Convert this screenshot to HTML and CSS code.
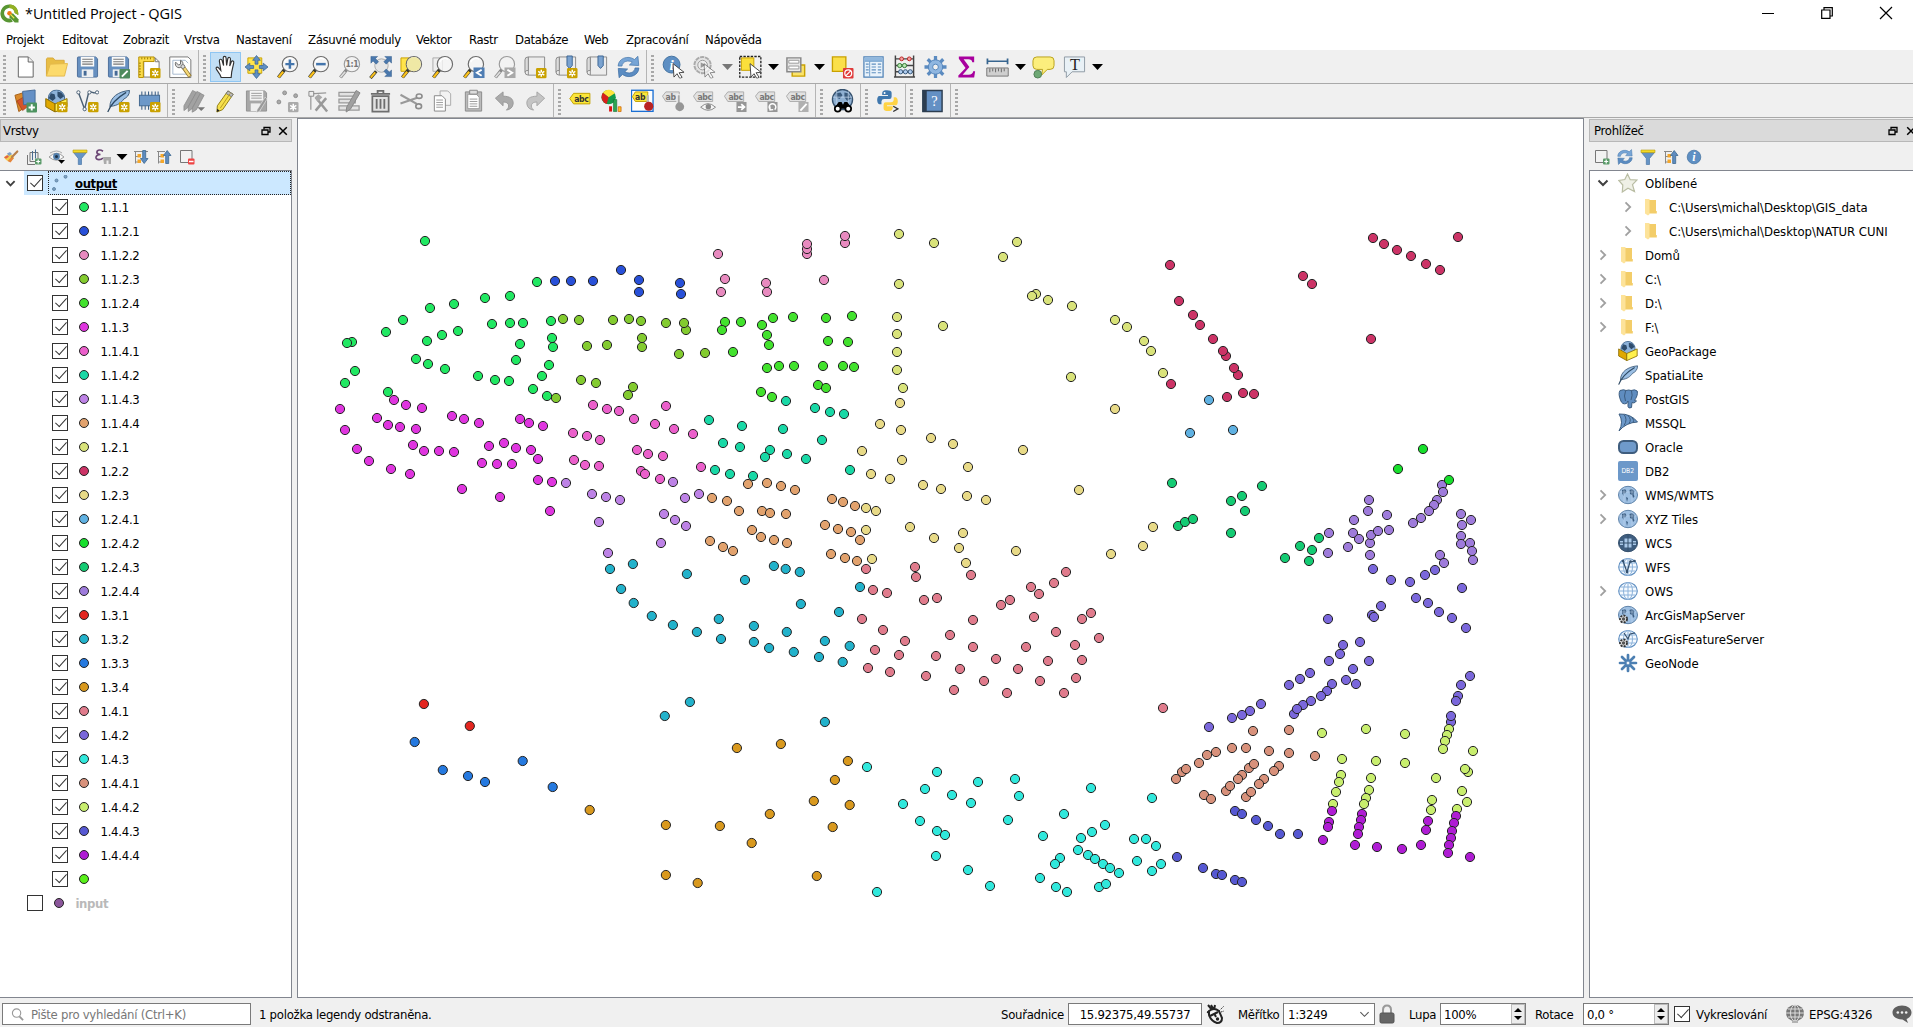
FILE: index.html
```html
<!DOCTYPE html>
<html lang="cs">
<head>
<meta charset="utf-8">
<title>*Untitled Project - QGIS</title>
<link rel="stylesheet" href="styles.css">
</head>
<body>
<svg class="defs" width="0" height="0" aria-hidden="true">
<defs>
<symbol id="star" viewBox="0 0 24 24"><rect x="12.5" y="13" width="11" height="11" rx="1.5" fill="#c9a100"/><path d="M18 14.8v7.4M14.8 16.6l6.4 3.8M21.2 16.6l-6.4 3.8" stroke="#fff" stroke-width="1.5"/><circle cx="18" cy="18.5" r=".9" fill="#c9a100"/></symbol>
<symbol id="gstar" viewBox="0 0 24 24"><rect x="12.5" y="13" width="11" height="11" rx="1.5" fill="#aaa"/><path d="M18 14.8v7.4M14.8 16.6l6.4 3.8M21.2 16.6l-6.4 3.8" stroke="#fff" stroke-width="1.5"/></symbol>
<symbol id="arrow" viewBox="0 0 24 24"><path d="M11.5 8.500l11.500 9-5.200.5 3.200 4.800-2.400 1.200-2.900-5-3.200 3.500z" fill="#fff" stroke="#444" stroke-width="1"/></symbol>
<symbol id="mag" viewBox="0 0 24 24"><path d="M9.200 14.500L2.500 23" stroke="#3a3a2c" stroke-width="3.600"/><path d="M7.500 17L2.700 22.600" stroke="#fcc21b" stroke-width="2.300"/><circle cx="14.500" cy="9" r="8" fill="#f6f6f6" fill-opacity=".8" stroke="#6b6b6b" stroke-width="1.200"/><path d="M9 7a6 6 0 0 1 9-3" fill="none" stroke="#fff" stroke-width="1.500"/></symbol>
<symbol id="gmag" viewBox="0 0 24 24"><path d="M9.200 14.500L2.500 23" stroke="#888" stroke-width="3.400"/><path d="M7.500 17L2.700 22.600" stroke="#ddd" stroke-width="1.800"/><circle cx="14.500" cy="9" r="8" fill="#f2f2f2" stroke="#9a9a9a" stroke-width="1.200"/></symbol>
<symbol id="new" viewBox="0 0 24 24"><path d="M4.500 1.500h10.500l5 5v16H4.500z" fill="#fff" stroke="#606060"/><path d="M14.800 1.500v5.300h5.200" fill="#eee" stroke="#606060"/></symbol>
<symbol id="open" viewBox="0 0 24 24"><path d="M1.500 21.500v-18l1-.9h6l2 2.400h9.500v3.500" fill="#e8bd45" stroke="#d8a93c"/><path d="M1.500 21.500l4-12.500 18-.6-3.200 13.100z" fill="#fcda6c" stroke="#e4b94b"/></symbol>
<symbol id="save" viewBox="0 0 24 24"><path d="M1.500 2.500q0-1 1-1h18l2 2v18q0 1-1 1h-19q-1 0-1-1z" fill="#6790c0" stroke="#4c6f9b"/><rect x="5" y="1.500" width="14" height="10" fill="#fafafa"/><path d="M6.500 4h11M6.500 6.500h11M6.500 9h11" stroke="#777" stroke-width="1.100"/><rect x="6" y="14.500" width="12" height="8" fill="#eef0f2"/><rect x="8" y="16" width="3" height="5" fill="#456a96"/></symbol>
<symbol id="gsave" viewBox="0 0 24 24"><path d="M1.500 1.500h19l2 2v19h-21z" fill="#a7a7a7" stroke="#929292"/><rect x="5" y="1.500" width="14" height="10" fill="#f4f4f4"/><path d="M6.500 4h11M6.500 6.500h11M6.500 9h11" stroke="#999"/><rect x="6" y="14.500" width="10" height="8" fill="#eee"/><path d="M21 8l2 2-8 13-3 1 .6-3z" fill="#999" stroke="#efefef" stroke-width=".6"/></symbol>
<symbol id="layout" viewBox="0 0 24 24"><path d="M6 2.500h12l4 4v16H6z" fill="#fff" stroke="#777"/><path d="M18 2.500v4h4" fill="none" stroke="#777"/><path d="M.8 1.500h16v4.800H5.600V23H.8z" fill="#fbdc4a" stroke="#b78f00"/><path d="M4 2v2M7 2v2M10 2v2M13 2v2M1 8h2M1 11h2M1 14h2M1 17h2M1 20h2" stroke="#9b7a00"/></symbol>
<symbol id="manager" viewBox="0 0 24 24"><path d="M.8 1.500h19l3 3V23h-22z" fill="#fff" stroke="#777"/><path d="M4 5h13l3 3M4 5v14.500h16" fill="none" stroke="#a5b8ce"/><path d="M14 11l8 11" stroke="#8c7430" stroke-width="4"/><path d="M15 12l6.500 9.500" stroke="#f5d878" stroke-width="2.400"/><path d="M7 7a4 4 0 1 0 5-2v4l-2 1z" fill="#ddd" stroke="#666"/><circle cx="14.500" cy="11.500" r="2" fill="#ddd" stroke="#777"/></symbol>
<symbol id="hand" viewBox="0 0 24 24"><path d="M7.500 23l-1.200-3-3.700-5.500c-1.300-2 .7-3.300 2.200-1.600l2.300 2.700L5.600 5.800c-.2-2.200 2.300-2.700 2.900-.5L10 10.500l-.4-8c0-2.200 2.900-2.200 3 0l.6 7.800 1.200-7c.5-2 3-1.600 2.800.6l-.8 7.100 1.700-4.400c.9-1.800 3-1 2.500 1.100L18.500 17l-.6 6z" fill="#fff" stroke="#303030" stroke-width="1.200"/></symbol>
<symbol id="pan" viewBox="0 0 24 24"><path d="M3 2.500h14.500v16H3z" fill="#ffe44a" stroke="#c9a100"/><g fill="#5f8fc4" stroke="#3b6593" stroke-width=".8"><path d="M12 0l4 5h-2.500v4h-3V5H8zM12 24l4-5h-2.500v-4h-3v4H8zM0 12l5-4v2.500h4v3H5V16zM24 12l-5-4v2.500h-4v3h4V16z"/></g></symbol>
<symbol id="zin" viewBox="0 0 24 24"><use href="#mag"/><path d="M14.500 4.300v9.400M9.800 9h9.400" stroke="#4475ac" stroke-width="2.600"/></symbol>
<symbol id="zout" viewBox="0 0 24 24"><use href="#mag"/><path d="M9.500 9h10" stroke="#4475ac" stroke-width="2.600"/></symbol>
<symbol id="z11" viewBox="0 0 24 24"><use href="#gmag"/><text x="14.500" y="12.300" text-anchor="middle" class="g-bold" fill="#777">1:1</text></symbol>
<symbol id="zfull" viewBox="0 0 24 24"><path d="M7.500 16.500L1.500 23.500" stroke="#3a3a2c" stroke-width="3.400"/><path d="M6.500 17.500L1.800 23" stroke="#fcc21b" stroke-width="2"/><circle cx="13" cy="10.500" r="7" fill="#e6e6e6" stroke="#aaa"/><g fill="#4a78ad" stroke="#335b89" stroke-width=".5"><path d="M2 1h7L6.800 3.200 10 6.500 7.500 9 4.200 5.700 2 8zM23.500 1h-7l2.200 2.200L15.500 6.500 18 9l3.300-3.300L23.500 8zM23.500 22h-7l2.200-2.200-3.200-3.300L18 14l3.300 3.300 2.200-2.300z"/></g></symbol>
<symbol id="zsel" viewBox="0 0 24 24"><path d="M1 2.500h10v14H1z" fill="#ffe44a" stroke="#c9a100"/><use href="#mag"/><circle cx="14.500" cy="9" r="7.400" fill="#efe8a5"/></symbol>
<symbol id="zlay" viewBox="0 0 24 24"><path d="M2 2.500h10v14H2z" fill="#eee" stroke="#aaa"/><use href="#mag"/></symbol>
<symbol id="zlast" viewBox="0 0 24 24"><use href="#mag"/><rect x="12" y="12.500" width="11.500" height="11" fill="#4f7db3"/><path d="M20.500 14.800l-5 3.200 5 3.200" fill="none" stroke="#fff" stroke-width="2"/></symbol>
<symbol id="znext" viewBox="0 0 24 24"><use href="#gmag"/><rect x="12" y="12.500" width="11.500" height="11" fill="#a9a9a9"/><path d="M15 14.800l5 3.200-5 3.200" fill="none" stroke="#fff" stroke-width="2"/></symbol>
<symbol id="map" viewBox="0 0 24 24"><path d="M4.500 1.500h17v19h-17z" fill="#ececec" stroke="#8a8a8a"/><path d="M4.500 20.500q-3.500 0-3.500-3.500V4.500q0-3 3.500-3v14q-3.500 0-3.500 2" fill="#dcdcdc" stroke="#8a8a8a"/></symbol>
<symbol id="mapstar" viewBox="0 0 24 24"><use href="#map"/><use href="#star"/></symbol>
<symbol id="bmstar" viewBox="0 0 24 24"><use href="#map"/><path d="M12.500.5h5.500v10l-2.800 3-2.700-3z" fill="#7ba3d0" stroke="#3d6593"/><use href="#star"/></symbol>
<symbol id="bm" viewBox="0 0 24 24"><use href="#map"/><path d="M12.500.5h5.500v10l-2.800 3-2.700-3z" fill="#7ba3d0" stroke="#3d6593"/></symbol>
<symbol id="refresh" viewBox="0 0 24 24"><path d="M1.200 11C1.200 3.500 11-1 18.300 4.200L21.800.8l.9 9.700-9.800-.6 3-2.900C12 4.500 5.500 6 5.200 11z" fill="#77a5d6" stroke="#4879ae" stroke-width=".8"/><path d="M22.800 13c0 7.500-9.800 12-17.100 6.800l-3.500 3.400-.9-9.700 9.800.6-3 2.900c3.900 2.500 10.400 1 10.700-4z" fill="#5b8cc2" stroke="#4171a5" stroke-width=".8"/></symbol>
<symbol id="info" viewBox="0 0 24 24"><circle cx="10" cy="9.500" r="8.800" fill="#5e8fc3" stroke="#41709f"/><text x="10" y="15" text-anchor="middle" class="g-serif" font-size="16" fill="#fff">i</text><use href="#arrow"/></symbol>
<symbol id="action" viewBox="0 0 24 24"><circle cx="10" cy="10" r="8.500" fill="#e4e4e4" stroke="#aaa" stroke-width="2" stroke-dasharray="4.500 .8"/><circle cx="10" cy="10" r="5" fill="#eee" stroke="#999"/><path d="M8 7l5 3-5 3z" fill="#999"/><use href="#arrow" opacity=".6"/></symbol>
<symbol id="select" viewBox="0 0 24 24"><rect x=".8" y="1" width="22" height="21.500" fill="none" stroke="#222" stroke-width="1.400" stroke-dasharray="2.500 1.300"/><path d="M2.500 2.500h13v13h-13z" fill="#fbdf3b" stroke="#c9a100"/><use href="#arrow"/></symbol>
<symbol id="selval" viewBox="0 0 24 24"><path d="M7.500 10h13v11.500h-13z" fill="#fbe36a" stroke="#c9a100" stroke-width="1.500"/><path d="M2 2.500h14.500v14.500H2z" fill="#e9e9e9" stroke="#868686" stroke-width="1.500"/><path d="M4 5h10.500v3H4zM4 11h10.500v3H4z" fill="#fff" stroke="#999"/></symbol>
<symbol id="desel" viewBox="0 0 24 24"><path d="M1.500 1.500h14v15h-14z" fill="#fbe04a" stroke="#c9a100" stroke-width="1.400"/><rect x="12.500" y="13" width="11" height="11" rx="1" fill="#e03a3a"/><circle cx="18" cy="18.500" r="3.600" fill="none" stroke="#fff" stroke-width="1.300"/><path d="M15.500 21l5-5" stroke="#fff" stroke-width="1.300"/></symbol>
<symbol id="table" viewBox="0 0 24 24"><path d="M2 1.500h20v21H2z" fill="#eaf3fb" stroke="#4f81b6" stroke-width="1.300"/><path d="M2.500 2h19v4h-19z" fill="#91b8de"/><path d="M3 6h18M8 6v16" stroke="#6f9dca"/><path d="M4 9h3M4 12h3M4 15h3M4 18h3M10 9h4.500M10 12h4.500M10 15h4.500M10 18h4.500M16.500 9h3.500M16.500 12h3.500M16.500 15h3.500M16.500 18h3.500" stroke="#5f90c0" stroke-width="1.300"/></symbol>
<symbol id="abacus" viewBox="0 0 24 24"><path d="M2.500 0v23M21.500 0v23M2 3.500h20M2 10.500h20M2 17h20M1 22.500h22" stroke="#444" stroke-width="1.500"/><g stroke-width="1"><g fill="#f3a0a0" stroke="#b22"><circle cx="9" cy="3.500" r="2"/><circle cx="17" cy="3.500" r="2"/></g><g fill="#b6e8b0" stroke="#373"><circle cx="7" cy="10.500" r="2.200"/><circle cx="12" cy="10.500" r="2.200"/></g><g fill="#b0cdf0" stroke="#357"><circle cx="8" cy="17" r="2.200"/><circle cx="13" cy="17" r="2.200"/><circle cx="18" cy="17" r="2.200"/></g></g></symbol>
<symbol id="gear" viewBox="0 0 24 24"><g stroke="#5b8bc0" stroke-width="3.400"><path d="M12 .5v23M.5 12h23M3.900 3.900l16.200 16.200M20.100 3.900L3.900 20.100"/></g><circle cx="12" cy="12" r="7.500" fill="#8fb6e0" stroke="#5485bb"/><circle cx="12" cy="12" r="3" fill="#f0f0f0" stroke="#5485bb"/></symbol>
<symbol id="sigma" viewBox="0 0 24 24"><path d="M4 1h16v6h-2q-.5-3-4-3H9l6 8-7 8h6q4.500 0 5-3.500h2L20 23H3.500v-2.200L11 13 4 3.500z" fill="#a8009e"/></symbol>
<symbol id="ruler" viewBox="0 0 24 24"><path d="M1.500 6h21M1.500 3v6M22.500 3v6" stroke="#37658f" stroke-width="1.800"/><path d="M.8 13h22.400v8.500H.8z" fill="#cfcfcf" stroke="#777"/><path d="M4 13.500v4M7 13.500v3M10 13.500v4M13 13.500v3M16 13.500v4M19 13.500v3" stroke="#666"/></symbol>
<symbol id="tip" viewBox="0 0 24 24"><path d="M5 1.500h14q4 0 4 4v5q0 4-4 4h-3l-6 6 1-6H5q-4 0-4-4v-5q0-4 4-4z" fill="#fcee7d" stroke="#b8a018"/><circle cx="6" cy="19.500" r="4" fill="#6ea875" stroke="#4e7d55"/></symbol>
<symbol id="text" viewBox="0 0 24 24"><path d="M1.500 1.500h21v15.500h-13l-6 6v-6h-2z" fill="#e9f1f6" stroke="#8e9aa4"/><text x="12.500" y="15" text-anchor="middle" class="g-serifn" font-size="17" fill="#222">T</text></symbol>
<symbol id="dsm" viewBox="0 0 24 24"><path d="M1 6l10-3 3 14-9 6z" fill="#d98a2c" stroke="#a65f16"/><path d="M3 12l12-7 3 10-9 7z" fill="#d3552b" stroke="#97350f" stroke-width=".6"/><path d="M9 2l13-1.500v14L10 16z" fill="#6590c5" stroke="#456b99"/><rect x="13" y="13.500" width="11" height="10.500" rx="1" fill="#4d9360"/><path d="M18.500 15.500v6.500M15.200 18.700h6.600" stroke="#fff" stroke-width="2"/></symbol>
<symbol id="gpkg" viewBox="0 0 24 24"><circle cx="12" cy="9" r="8.500" fill="#8db2d9" stroke="#3f658e"/><path d="M6 4l4 1 1 4-3 3-4-3zM13 2l4 1 3 4-4 3-3-3z" fill="#2f4d6d"/><path d="M.8 9.500l9.700 5.500v8.500L.8 18z" fill="#e0a800" stroke="#8a6b00"/><path d="M10.500 15l12.500-5.500V18l-12.500 5.500z" fill="#fff04d" stroke="#8a6b00"/></symbol>
<symbol id="newpkg" viewBox="0 0 24 24"><use href="#gpkg"/><use href="#star"/></symbol>
<symbol id="shp" viewBox="0 0 24 24"><path d="M2.500 3L9 20.500 13 4q1-2 4-1t5 0" fill="none" stroke="#4b6075" stroke-width="1.500"/><g fill="#fff" stroke="#4b6075"><circle cx="2.500" cy="3" r="1.700"/><circle cx="9" cy="20.500" r="1.700"/><circle cx="14" cy="3" r="1.700"/><circle cx="22" cy="3" r="1.700"/></g></symbol>
<symbol id="newshp" viewBox="0 0 24 24"><use href="#shp"/><use href="#star"/></symbol>
<symbol id="feather" viewBox="0 0 24 24"><path d="M3 18C3 8 12 2 23.500 1c0 5-3 7.500-6 9-3 4-6 6.500-13 7.500z" fill="#9bbfe4" stroke="#3d5a78"/><path d="M.8 23.500Q5 12 20 3" fill="none" stroke="#2d4963" stroke-width="1.300"/></symbol>
<symbol id="newfeather" viewBox="0 0 24 24"><use href="#feather"/><use href="#star"/></symbol>
<symbol id="chip" viewBox="0 0 24 24"><path d="M4 2v19M7.500 2v19M11 2v19M14.500 2v19M18 2v19M21 2v19" stroke="#3c5f86" stroke-width="1.100"/><rect x="1.500" y="6" width="21" height="11" fill="#6c98c9" stroke="#42688f"/><use href="#star"/></symbol>
<symbol id="pencils" viewBox="0 0 24 24"><g fill="#a2a2a2" stroke="#8b8b8b" stroke-width=".8"><path d="M10 1l4 2L5 19l-4 3 0-5z"/><path d="M14.500 2l4 2-9 16-4 3 0-5z"/><path d="M18 4l4 2-8 15-4.500 3 .5-5z"/></g></symbol>
<symbol id="pencil" viewBox="0 0 24 24"><path d="M14.500 1.500L20 5 9 21l-6 2.500L3.500 17z" fill="#f6e04c" stroke="#8e7b14"/><path d="M14.500 1.500L20 5l-1.800 2.600-5.500-3.400z" fill="#bbb" stroke="#777"/><path d="M17 4L6.500 19.500" stroke="#b79b20"/><path d="M3 23.500l.3-3.500 2.500 2z" fill="#222"/></symbol>
<symbol id="pts" viewBox="0 0 24 24"><g fill="#aaa" stroke="#8d8d8d"><circle cx="3" cy="13" r="2"/><circle cx="9" cy="3.500" r="2"/><circle cx="20.500" cy="6.500" r="2"/></g><use href="#gstar"/></symbol>
<symbol id="vertex" viewBox="0 0 24 24"><path d="M4 21V4.500l16-1" fill="none" stroke="#999" stroke-width="1.300"/><path d="M2 2h5v5H2z" fill="#eee" stroke="#888"/><path d="M9 22L20 9M9 8l12 15" stroke="#999" stroke-width="2.600"/><path d="M8 8l4-3 4 3-5 5z" fill="#aaa"/></symbol>
<symbol id="multi" viewBox="0 0 24 24"><path d="M1 3h18v4H1zM1 10h17v4H1zM1 17h21v4.500H1z" fill="#e2e2e2" stroke="#999" stroke-width="1.300"/><path d="M19 1l4 2.500-10 17-4.500 3 .5-5z" fill="#a0a0a0" stroke="#888"/></symbol>
<symbol id="trash" viewBox="0 0 24 24"><path d="M3.500 7h17v16h-17z" fill="#e2e2e2" stroke="#6e6e6e" stroke-width="1.800"/><path d="M2 4.500h20M9 4V1.500h6V4M8 10v10M12 10v10M16 10v10" fill="none" stroke="#6e6e6e" stroke-width="1.900"/></symbol>
<symbol id="cut" viewBox="0 0 24 24"><path d="M.5 5.500l17 9.500M.5 14.500L18 8.500" stroke="#999" stroke-width="2.200"/><ellipse cx="20" cy="7" rx="3" ry="2.300" fill="none" stroke="#8c8c8c" stroke-width="1.700"/><ellipse cx="19.500" cy="17.500" rx="3" ry="2.500" fill="none" stroke="#8c8c8c" stroke-width="1.700"/></symbol>
<symbol id="copy" viewBox="0 0 24 24"><path d="M9.500 1.500h8l3 3v12h-11z" fill="#f3f3f3" stroke="#aaa"/><path d="M3.500 6.500h8l3.500 3.500v12.500H3.500z" fill="#fff" stroke="#888"/><path d="M5.500 11h7M5.500 13.500h7M5.500 16h7M5.500 18.500h7" stroke="#999"/></symbol>
<symbol id="paste" viewBox="0 0 24 24"><path d="M3.500 2.500h17v20h-17z" fill="#bbb" stroke="#8a8a8a"/><path d="M6 5h9l3 3v12H6z" fill="#fff" stroke="#999"/><path d="M8 .8h8v4H8z" fill="#ddd" stroke="#888"/><path d="M8 10h8M8 12.500h8M8 15h8M8 17.500h8" stroke="#999"/></symbol>
<symbol id="undo" viewBox="0 0 24 24"><path d="M2.500 9l8-6.500V7c7 0 11 2.500 10.500 8-.4 4-3.500 6-7 6.500 4-3.500 3-8.500-3.500-8.500v4z" fill="#aaa" stroke="#999"/></symbol>
<symbol id="redo" viewBox="0 0 24 24"><path d="M21.500 9l-8-6.500V7C6.500 7 2.500 9.500 3 15c.4 4 3.500 6 7 6.500-4-3.500-3-8.500 3.500-8.500v4z" fill="#c4c4c4" stroke="#a5a5a5"/></symbol>
<symbol id="abc" viewBox="0 0 24 24"><path d="M.8 9.500l4-5.500h17v11H4.800z" fill="#fbe63a" stroke="#c0a000"/><text x="12.800" y="13" text-anchor="middle" class="g-bold" fill="#333">abc</text></symbol>
<symbol id="gabc" viewBox="0 0 24 24"><path d="M.5 7L4 2.500h16.500v10H4z" fill="#e2e2e2" stroke="#ababab"/><text x="12" y="10.500" text-anchor="middle" class="g-bold" fill="#777">abc</text></symbol>
<symbol id="chart" viewBox="0 0 24 24"><circle cx="9" cy="8" r="7.500" fill="#159a4a"/><path d="M9 8L3 3.500A7.500 7.500 0 0 1 15.500 4z" fill="#ffe43a"/><path d="M9 8L3 3.500A7.500 7.500 0 0 0 7 15z" fill="#d8201c"/><path d="M9.500 17.500h3V23h-3z" fill="#d11"/><path d="M14 10.500h3.500V23H14z" fill="#2aa653" stroke="#176b35" stroke-width=".6"/><path d="M19 18h3v5h-3z" fill="#ffc21e" stroke="#c61" stroke-width=".8"/></symbol>
<symbol id="pinabc" viewBox="0 0 24 24"><rect x=".5" y=".8" width="22.500" height="22" fill="#fdfdfd" stroke="#1a6fd4" stroke-width="1.400"/><path d="M1.500 7.500l3-5h13v10h-13z" fill="#fbe63a" stroke="#c0a000"/><text x="9.500" y="11" text-anchor="middle" class="g-bold" fill="#333">ab</text><path d="M17.500 6v10" stroke="#bbb" stroke-width="2.500"/><circle cx="18.500" cy="17.500" r="4.800" fill="#b92222"/></symbol>
<symbol id="gpin" viewBox="0 0 24 24"><path d="M.5 7L4 2.500h14v10H4z" fill="#e2e2e2" stroke="#ababab"/><text x="9" y="10.500" text-anchor="middle" class="g-bold" fill="#777">ab</text><path d="M17.500 5v12" stroke="#efefef" stroke-width="5"/><path d="M17.500 6v10" stroke="#aaa" stroke-width="2"/><circle cx="18.500" cy="18" r="4.600" fill="#969696"/></symbol>
<symbol id="geye" viewBox="0 0 24 24"><use href="#gabc"/><path d="M8 18.500q7.500-7.500 15.500 0-7.500 6.500-15.500 0z" fill="#f5f5f5" stroke="#888"/><circle cx="16" cy="18" r="2.800" fill="#888"/></symbol>
<symbol id="gmove" viewBox="0 0 24 24"><use href="#gabc"/><rect x="13" y="13" width="10.500" height="10.500" fill="#969696"/><path d="M14.500 18.300h6M18 15.300l3.300 3-3.300 3" fill="none" stroke="#fff" stroke-width="1.900"/></symbol>
<symbol id="grot" viewBox="0 0 24 24"><use href="#gabc"/><rect x="13" y="13" width="10.500" height="10.500" fill="#969696"/><path d="M16 21a3.500 3.500 0 1 1 4.500 0M15.500 17.500l.2 3.800 3.300-.3" fill="none" stroke="#fff" stroke-width="1.500"/></symbol>
<symbol id="gedit" viewBox="0 0 24 24"><use href="#gabc"/><rect x="13" y="13" width="10.500" height="10.500" fill="#b0b0b0"/><path d="M15 22l6.500-7" stroke="#fff" stroke-width="2"/></symbol>
<symbol id="search3" viewBox="0 0 24 24"><circle cx="12" cy="10.500" r="10.500" fill="#8fb0d2" stroke="#35516e" stroke-width="1.400"/><path d="M5 4l5-1 2 3-3 4-4-2zM14 3l4 1 3 5-4 3-3-4z" fill="#3a5a7c"/><path d="M2 8h20M6 1.500v15M18 2v13" stroke="#c3d8ee" stroke-width=".8"/><path d="M8 13h3l1.500 3L14 13h3l5 7H3z" fill="#000"/><circle cx="7" cy="20" r="3" fill="#fff" stroke="#000" stroke-width="1.800"/><circle cx="18" cy="20" r="3" fill="#fff" stroke="#000" stroke-width="1.800"/></symbol>
<symbol id="python" viewBox="0 0 24 24"><path d="M11.500.8c-5 0-5 1.500-5 5h6v1H3.500c-3 0-3 8 0 8.500h2.200v-3q.3-2.300 2.800-2.300h5.500q2.300 0 2.300-2.500V3.500C16.300 1.500 14 .8 11.500.8z" fill="#3f77ad"/><path d="M12.500 22.500c4.500 0 5-1.500 5-5h-6v-1h9c3 0 3-8 0-8.500h-2v3q-.3 2.300-2.800 2.300h-5.500q-2.300 0-2.300 2.500v4c0 2 2 2.700 4.600 2.700z" fill="#ffd344"/><circle cx="9" cy="3.600" r="1" fill="#fff"/><path d="M18 17.500l4.800 2.700L18 23" fill="none" stroke="#333" stroke-width="1.300"/></symbol>
<symbol id="help" viewBox="0 0 24 24"><path d="M2 1h20v22H2z" fill="#6490c4" stroke="#2c3d50" stroke-width="1.500"/><path d="M1.500.5H6v23H1.500z" fill="#2c3d50"/><text x="14" y="17" text-anchor="middle" class="g-serifn" font-size="15" fill="#fff">?</text></symbol>
<symbol id="chev" viewBox="0 0 12 12"><path d="M1.500 3.500L6 8l4.500-4.500" fill="none" stroke="#404040" stroke-width="2"/></symbol>
<symbol id="chevr" viewBox="0 0 12 12"><path d="M3.500 1.300L8.200 6l-4.700 4.700" fill="none" stroke="#a0a0a0" stroke-width="1.800"/></symbol>
<symbol id="float" viewBox="0 0 10 10"><path d="M3 3.500V1.500h6v4.500H7" fill="none" stroke="#000" stroke-width="1.300"/><path d="M1 4h6v4.500H1z" fill="none" stroke="#000" stroke-width="1.300"/></symbol>
<symbol id="close" viewBox="0 0 10 10"><path d="M1.200 1.200l7.600 7.600M8.800 1.200L1.200 8.800" stroke="#000" stroke-width="1.500"/></symbol>
<symbol id="brush" viewBox="0 0 16 16"><path d="M1 8.500q3-4 7-3.500l3 4-3.500 3.500q-4 0-6.500-4z" fill="#f5cf4e"/><path d="M1 8.300l3.500-2 1.500 1.500-3 2z" fill="#e0604a"/><path d="M4 4.500l3-1.500 2 2-3 2z" fill="#7f9fc6"/><path d="M4.500 12l4-4 2.500 1-3.500 4.500z" fill="#e5853b"/><path d="M9 8l5.300-5.500" stroke="#b9814b" stroke-width="2.200" stroke-linecap="round"/></symbol>
<symbol id="addgrp" viewBox="0 0 16 16"><path d="M4 3.500h8v9H4z" fill="#eee" stroke="#777"/><path d="M1.500 6v9.500H9" fill="none" stroke="#777"/><path d="M6.500 2v9M9.500 .5v9" stroke="#4b6d92"/><rect x="9" y="9.500" width="6.500" height="6" rx="1" fill="#5a9a69"/><path d="M12.200 10.500v4M10.200 12.500h4" stroke="#fff" stroke-width="1.200"/></symbol>
<symbol id="eye" viewBox="0 0 16 16"><path d="M0 8q7.500-7.500 15 0-7.500 6.500-15 0z" fill="#f8f8f8" stroke="#999"/><circle cx="7.500" cy="7.500" r="3.400" fill="#5380ad"/><circle cx="7.500" cy="7.500" r="1.500" fill="#1f3247"/><path d="M1 4q7-4 12 0" fill="none" stroke="#aaa"/><path d="M9 11h7l-3.500 3.800z" fill="#000"/></symbol>
<symbol id="filter" viewBox="0 0 16 16"><path d="M1.500 3.500h13l-5 6v6h-3.200v-6z" fill="#6694c6" stroke="#4b77a8" stroke-width=".7"/><path d="M1 1h14v2.600H1z" fill="#f4d926" stroke="#b79b10" stroke-width=".6"/></symbol>
<symbol id="eps" viewBox="0 0 16 16"><path d="M8 2.200C4-.5 1.500 2 2 3.800c.3 1.200 2 1.700 3.500 1.700C2.500 5.500.8 7 1 8.700c.5 2.700 5 2.500 7 .3" fill="none" stroke="#6b4574" stroke-width="1.700"/><path d="M8 8h8v7h-2.500v-3.500h-2V15H9z" fill="#aaa"/></symbol>
<symbol id="expand" viewBox="0 0 16 16"><path d="M1 2.500h14M2.500 2.500v12M2.500 7.500h4M2.500 13h4" stroke="#888"/><rect x="4.500" y="5" width="3.500" height="3.500" fill="#f5a72a"/><rect x="4.500" y="10.500" width="3.500" height="3.500" fill="#f5a72a"/><path d="M9.700 1.500h3v8H15l-3.800 5L7.500 9.500h2.200z" fill="#5e8cc0" stroke="#3d688f" stroke-width=".8"/></symbol>
<symbol id="collapse" viewBox="0 0 16 16"><path d="M1 2.500h8M2.500 2.500v12M2.500 7.500h4M2.500 13h4" stroke="#888"/><rect x="4.500" y="5" width="3.500" height="3.500" fill="#f5a72a"/><rect x="4.500" y="10.500" width="3.500" height="3.500" fill="#f5a72a"/><path d="M9.700 14.500h3v-8H15l-3.800-5-3.700 5h2.200z" fill="#5e8cc0" stroke="#3d688f" stroke-width=".8"/></symbol>
<symbol id="remove" viewBox="0 0 16 16"><path d="M1.500 1.500h11.500v12H1.500z" fill="#f2f2f2" stroke="#777"/><rect x="9" y="9.500" width="6.500" height="6" rx="1" fill="#e44"/><path d="M10 12.500h4.500" stroke="#fff" stroke-width="1.500"/></symbol>
<symbol id="addsel" viewBox="0 0 16 16"><path d="M1.500 1.500h11.500v12H1.500z" fill="#f2f2f2" stroke="#777"/><rect x="9" y="9.500" width="6.500" height="6" rx="1" fill="#5a9a69"/><path d="M12.200 10.500v4M10.200 12.500h4" stroke="#fff" stroke-width="1.200"/></symbol>
<symbol id="info2" viewBox="0 0 16 16"><circle cx="8" cy="8" r="6.800" fill="#5e8fc3" stroke="#41709f" stroke-width=".7"/><text x="8" y="12.200" text-anchor="middle" class="g-serif" font-size="12" fill="#fff">i</text></symbol>
<symbol id="ptlayer" viewBox="0 0 16 16"><g fill="#7fa3c4" stroke="#55799b" stroke-width=".8"><circle cx="2" cy="14" r="1.500"/><circle cx="4.500" cy="5.500" r="1.500"/><circle cx="13.500" cy="1.700" r="1.500"/></g></symbol>
<symbol id="fav" viewBox="0 0 20 20"><path d="M9.500 1l2.700 5.700 6.800.3-4.500 4.700 2 6.800-6.500-3.300L4.300 19l.5-7L.8 7.500l6-1z" fill="#eff0e6" stroke="#b9bda3" stroke-width="1.200"/></symbol>
<symbol id="folder" viewBox="0 0 20 20"><path d="M7 3h7v11h.8v2.500H7z" fill="#f3cd69"/><path d="M3 2h4.500v15.200L6 18.500 3 16.500z" fill="#fde39a"/></symbol>
<symbol id="pg" viewBox="0 0 20 20"><path d="M2 1.500q4-1.500 6 0 3-1 5 0 4-1.500 6.200.5c1 3-1 7-2.700 9.500l2 .5-2.500 2-2-.5-.5 5q-3 1.500-3.500-1L10 12l-1.500 2.500Q4 16 2.500 11 0 5 2 1.500z" fill="#5f8dc0" stroke="#3c5d80"/><path d="M7.500 2q-2 5 0 10M13.500 2q1.500 4-.5 9" fill="none" stroke="#3c5d80"/></symbol>
<symbol id="mssql" viewBox="0 0 20 20"><path d="M1 1q12-.5 18.500 8Q8 9.500 1 18q5-9 0-17z" fill="#6c98c9" stroke="#3c5d80"/><path d="M6 1.500q4 5 0 11M10 2.500q4 4 1 8M14 4.500q3 3 1 5" fill="none" stroke="#3c5d80"/></symbol>
<symbol id="oracle" viewBox="0 0 20 20"><rect x="1" y="4" width="18" height="12" rx="4.500" fill="#6f9acb" stroke="#3f5d7e" stroke-width="2"/></symbol>
<symbol id="db2" viewBox="0 0 20 20"><rect width="20" height="20" rx="2" fill="#6c98c9"/><text x="9.800" y="12" text-anchor="middle" class="g-sans" font-size="6.800" fill="#fff">DB2</text></symbol>
<symbol id="globe" viewBox="0 0 20 20"><ellipse cx="10" cy="10" rx="9.500" ry="8.700" fill="#9dbfe2" stroke="#5f83a9"/><path d="M4 5l3-1 1 1.500.5 1-1.500 2-1.500-.5v3l-1.500-3zM11.500 5l2.500-1 2.500 2.500-1 2.500 1 2.500-1.500 1.500-1-3-2-1zM8 12l2 1-1 4z" fill="#3d5f84"/><path d="M6 2.500v15M14 2.500v15M1 7h18" stroke="#c5dbf0" stroke-width=".5"/></symbol>
<symbol id="wcs" viewBox="0 0 20 20"><ellipse cx="10" cy="10" rx="9.500" ry="8.700" fill="#3f5e80" stroke="#35506c"/><path d="M6.500 5.500h7v9h-7zM2 8h3v4H2zM15 8h3v4h-3z" fill="#a9c8e8"/><path d="M10 1.500v17M1 10h18" stroke="#35506c"/></symbol>
<symbol id="wire" viewBox="0 0 20 20"><ellipse cx="10" cy="10" rx="9.300" ry="8.500" fill="#f5faff" stroke="#5d8dc0" stroke-width="1.100"/><ellipse cx="10" cy="10" rx="4.500" ry="8.500" fill="none" stroke="#8cb2da"/><path d="M10 1.500v17M1 10h18M2.500 6h15M2.500 14h15" stroke="#8cb2da"/></symbol>
<symbol id="wfs" viewBox="0 0 20 20"><use href="#wire"/><path d="M5 4l4 11L12 5l5-1" fill="none" stroke="#34506d" stroke-width="1.200"/><g fill="#34506d"><circle cx="5" cy="4" r="1.300"/><circle cx="9" cy="15" r="1.300"/><circle cx="12.500" cy="4.500" r="1.300"/><circle cx="16.500" cy="4" r="1.300"/></g></symbol>
<symbol id="cog" viewBox="0 0 20 20"><circle cx="5.500" cy="14" r="3.500" fill="#ddd" stroke="#333" stroke-width="1.800" stroke-dasharray="2 1.200"/><circle cx="5.500" cy="14" r="1.700" fill="#555"/></symbol>
<symbol id="ams" viewBox="0 0 20 20"><use href="#globe"/><use href="#cog"/></symbol>
<symbol id="afs" viewBox="0 0 20 20"><use href="#wire"/><path d="M6 4l4 6 2-5 5-1" fill="none" stroke="#34506d" stroke-width="1.200"/><use href="#cog"/></symbol>
<symbol id="geonode" viewBox="0 0 20 20"><path d="M10 2v16M2 10h16M4 4l12 12M16 4L4 16" stroke="#4c7fb2" stroke-width="2.700" stroke-linecap="round"/><circle cx="10" cy="10" r="2" fill="#f2f7fc" stroke="#4c7fb2"/></symbol>
</defs>
</svg>

<div class="window">
<header class="titlebar">
<svg class="logo" viewBox="0 0 20 20"><path d="M10 .5a9.500 9.500 0 1 0 3.500 18.300l-2.200-3.700A5.600 5.600 0 1 1 15.500 9.500l3.700 2A9.500 9.500 0 0 0 10 .5z" fill="#589632"/><path d="M10 .5a9.500 9.500 0 0 1 9.200 11l-3.700-2A5.600 5.600 0 0 0 10 4.400z" fill="#93b023"/><path d="M10 10h3.800l5.700 6v3.500h-4L10 14z" fill="#589632"/><circle cx="10" cy="9.700" r="2.400" fill="#ee7913"/><path d="M11 11l4 4" stroke="#f0e64a" stroke-width="1.200"/></svg>
<span class="title">*Untitled Project - QGIS</span>
<span class="winbtns">
<svg viewBox="0 0 12 12"><path d="M0 6.500h12" stroke="#000"/></svg>
<svg viewBox="0 0 12 12"><path d="M3 3V.7h8.300V9H9" fill="none" stroke="#000" stroke-width="1.200"/><path d="M.7 3h8.300v8.300H.7z" fill="none" stroke="#000" stroke-width="1.200"/></svg>
<svg viewBox="0 0 12 12"><path d="M0 0l12 12M12 0L0 12" stroke="#000" stroke-width="1.200"/></svg>
</span>
</header>
<nav class="menubar"><span class="m1">Projekt</span><span class="m2">Editovat</span><span class="m3">Zobrazit</span><span class="m4">Vrstva</span><span class="m5">Nastavení</span><span class="m6">Zásuvné moduly</span><span class="m7">Vektor</span><span class="m8">Rastr</span><span class="m9">Databáze</span><span class="m10">Web</span><span class="m11">Zpracování</span><span class="m12">Nápověda</span></nav>

<div class="toolrow">
<div class="tools first"><svg><use href="#new"/></svg><svg><use href="#open"/></svg><svg><use href="#save"/></svg><svg viewBox="0 0 24 24"><use href="#save"/><rect x="13" y="14" width="11" height="10" rx="1" fill="#4d8a5c"/><path d="M15.500 22l6-6" stroke="#fff" stroke-width="2"/></svg><svg viewBox="0 0 24 24"><use href="#layout"/><use href="#star"/></svg><svg><use href="#manager"/></svg></div>
<div class="tools"><svg class="on"><use href="#hand"/></svg><svg><use href="#pan"/></svg><svg><use href="#zin"/></svg><svg><use href="#zout"/></svg><svg><use href="#z11"/></svg><svg><use href="#zfull"/></svg><svg><use href="#zsel"/></svg><svg><use href="#zlay"/></svg><svg><use href="#zlast"/></svg><svg><use href="#znext"/></svg><svg><use href="#mapstar"/></svg><svg><use href="#bmstar"/></svg><svg><use href="#bm"/></svg><svg><use href="#refresh"/></svg></div>
<div class="tools"><svg><use href="#info"/></svg><svg><use href="#action"/></svg><i class="drop dim"></i><svg><use href="#select"/></svg><i class="drop"></i><svg><use href="#selval"/></svg><i class="drop"></i><svg><use href="#desel"/></svg><svg><use href="#table"/></svg><svg><use href="#abacus"/></svg><svg><use href="#gear"/></svg><svg><use href="#sigma"/></svg><svg><use href="#ruler"/></svg><i class="drop"></i><svg><use href="#tip"/></svg><svg><use href="#text"/></svg><i class="drop"></i></div>
</div>
<div class="toolrow second">
<div class="tools first"><svg><use href="#dsm"/></svg><svg><use href="#newpkg"/></svg><svg><use href="#newshp"/></svg><svg><use href="#newfeather"/></svg><svg><use href="#chip"/></svg></div>
<div class="tools"><svg viewBox="0 0 24 24"><use href="#pencils"/><path d="M15 18.500h8l-4 4z" fill="#777"/></svg><svg><use href="#pencil"/></svg><svg><use href="#gsave"/></svg><svg><use href="#pts"/></svg><svg><use href="#vertex"/></svg><svg><use href="#multi"/></svg><svg><use href="#trash"/></svg><svg><use href="#cut"/></svg><svg><use href="#copy"/></svg><svg><use href="#paste"/></svg><svg><use href="#undo"/></svg><svg><use href="#redo"/></svg></div>
<div class="tools labels"><svg><use href="#abc"/></svg><svg><use href="#chart"/></svg><svg><use href="#pinabc"/></svg><svg><use href="#gpin"/></svg><svg><use href="#geye"/></svg><svg><use href="#gmove"/></svg><svg><use href="#grot"/></svg><svg><use href="#gedit"/></svg></div>
<div class="tools"><svg><use href="#search3"/></svg></div>
<div class="tools"><svg><use href="#python"/></svg></div>
<div class="tools"><svg><use href="#help"/></svg></div>
<div class="tools"></div>
</div>

<main class="work">
<section class="dock layers">
<div class="dockhead"><span>Vrstvy</span><svg class="fl"><use href="#float"/></svg><svg><use href="#close"/></svg></div>
<div class="docktools"><svg><use href="#brush"/></svg><svg><use href="#addgrp"/></svg><svg><use href="#eye"/></svg><svg><use href="#filter"/></svg><svg><use href="#eps"/></svg><i class="drop"></i><svg><use href="#expand"/></svg><svg><use href="#collapse"/></svg><svg><use href="#remove"/></svg></div>
<div class="tree" id="legend">
<div class="lrow root"><svg class="chev"><use href="#chev"/></svg><i class="cb on"></i><div class="sel"><svg><use href="#ptlayer"/></svg><b>output</b></div></div>
</div>
</section>
<section class="canvas"><svg id="points" viewBox="298 119 1285 878" width="1285" height="878"></svg></section>
<section class="dock browser">
<div class="dockhead"><span>Prohlížeč</span><svg class="fl"><use href="#float"/></svg><svg><use href="#close"/></svg></div>
<div class="docktools"><svg><use href="#addsel"/></svg><svg viewBox="0 0 24 24"><use href="#refresh"/></svg><svg><use href="#filter"/></svg><svg><use href="#collapse"/></svg><svg><use href="#info2"/></svg></div>
<div class="tree">
<div class="brow"><svg class="chev"><use href="#chev"/></svg><svg><use href="#fav"/></svg><span>Oblíbené</span></div>
<div class="brow sub"><svg class="chev"><use href="#chevr"/></svg><svg><use href="#folder"/></svg><span>C:\Users\michal\Desktop\GIS_data</span></div>
<div class="brow sub"><svg class="chev"><use href="#chevr"/></svg><svg><use href="#folder"/></svg><span>C:\Users\michal\Desktop\NATUR CUNI</span></div>
<div class="brow"><svg class="chev"><use href="#chevr"/></svg><svg><use href="#folder"/></svg><span>Domů</span></div>
<div class="brow"><svg class="chev"><use href="#chevr"/></svg><svg><use href="#folder"/></svg><span>C:\</span></div>
<div class="brow"><svg class="chev"><use href="#chevr"/></svg><svg><use href="#folder"/></svg><span>D:\</span></div>
<div class="brow"><svg class="chev"><use href="#chevr"/></svg><svg><use href="#folder"/></svg><span>F:\</span></div>
<div class="brow"><i class="chev"></i><svg><use href="#gpkg"/></svg><span>GeoPackage</span></div>
<div class="brow"><i class="chev"></i><svg><use href="#feather"/></svg><span>SpatiaLite</span></div>
<div class="brow"><i class="chev"></i><svg><use href="#pg"/></svg><span>PostGIS</span></div>
<div class="brow"><i class="chev"></i><svg><use href="#mssql"/></svg><span>MSSQL</span></div>
<div class="brow"><i class="chev"></i><svg><use href="#oracle"/></svg><span>Oracle</span></div>
<div class="brow"><i class="chev"></i><svg><use href="#db2"/></svg><span>DB2</span></div>
<div class="brow"><svg class="chev"><use href="#chevr"/></svg><svg><use href="#globe"/></svg><span>WMS/WMTS</span></div>
<div class="brow"><svg class="chev"><use href="#chevr"/></svg><svg><use href="#globe"/></svg><span>XYZ Tiles</span></div>
<div class="brow"><i class="chev"></i><svg><use href="#wcs"/></svg><span>WCS</span></div>
<div class="brow"><i class="chev"></i><svg><use href="#wfs"/></svg><span>WFS</span></div>
<div class="brow"><svg class="chev"><use href="#chevr"/></svg><svg><use href="#wire"/></svg><span>OWS</span></div>
<div class="brow"><i class="chev"></i><svg><use href="#ams"/></svg><span>ArcGisMapServer</span></div>
<div class="brow"><i class="chev"></i><svg><use href="#afs"/></svg><span>ArcGisFeatureServer</span></div>
<div class="brow"><i class="chev"></i><svg><use href="#geonode"/></svg><span>GeoNode</span></div>
</div>
</section>
</main>

<footer class="status">
<div class="box search"><svg viewBox="0 0 14 14"><circle cx="6" cy="5.500" r="4.500" fill="none" stroke="#999" stroke-width="1.200"/><path d="M9 9l4 4" stroke="#999" stroke-width="2"/></svg><span>Pište pro vyhledání (Ctrl+K)</span></div>
<span class="msg">1 položka legendy odstraněna.</span>
<div class="right">
<span class="s1">Souřadnice</span>
<div class="box coord"><span>15.92375,49.55737</span></div>
<svg class="mouse" viewBox="0 0 20 20"><path d="M3 1l5 6M6 1l3 5M10 1l-1 5M2 8l5 1" stroke="#222" stroke-width="2"/><path d="M4 7q5-4 10 0l3 7q0 5-5 5-6-2-8-8z" fill="#f4f4f4" stroke="#222" stroke-width="2"/><path d="M5 12l8-4M9 9l2 4" stroke="#222" stroke-width="2"/><circle cx="12.500" cy="15" r="1.700" fill="#222"/><path d="M14 7l5-5M16 8l3-1" stroke="#333" stroke-dasharray="1.500 1"/></svg>
<span class="s2">Měřítko</span>
<div class="box scale"><span>1:3249</span><svg viewBox="0 0 12 12"><path d="M1.500 3.500L6 8l4.500-4.500" fill="none" stroke="#555" stroke-width="1.200"/></svg></div>
<svg class="lock" viewBox="0 0 16 20"><path d="M4 10V6q0-4.500 4-4.500T12 6v4" fill="none" stroke="#999" stroke-width="2"/><rect x="1" y="9" width="14" height="10" rx="1.500" fill="#666" stroke="#555"/></svg>
<span class="s3">Lupa</span>
<div class="box mag"><span>100%</span><i class="spin"></i></div>
<span class="s4">Rotace</span>
<div class="box rot"><span>0,0 °</span><i class="spin"></i></div>
<i class="cb on"></i>
<span class="s5">Vykreslování</span>
<svg class="crs" viewBox="0 0 20 20"><ellipse cx="10" cy="9" rx="9" ry="8" fill="#777"/><ellipse cx="10" cy="9" rx="4.500" ry="8" fill="none" stroke="#ddd"/><path d="M10 1v16M1 9h18M3 5h14M3 13h14" stroke="#ddd"/><path d="M7 18h6" stroke="#777"/></svg>
<span class="s6">EPSG:4326</span>
<svg class="chat" viewBox="0 0 20 20"><path d="M10 1.500c5.500 0 9.500 3 9.500 7 0 3.500-2.500 5.500-5 6.500l1.500 4-5.500-3.500C4.500 15.500.5 12.500.5 8.500s4-7 9.500-7z" fill="#5e5e5e"/><g fill="#f0f0f0"><circle cx="5.800" cy="8.500" r="1.300"/><circle cx="10" cy="8.500" r="1.300"/><circle cx="14.200" cy="8.500" r="1.300"/></g></svg>
</div>
</footer>
</div>
<script src="map.js"></script>
</body>
</html>
```
FILE: styles.css
```css
* { box-sizing: border-box; }
html, body { margin: 0; height: 100%; overflow: hidden; }
body {
  font-family: "DejaVu Sans Condensed", "DejaVu Sans", Tahoma, sans-serif;
  font-stretch: condensed;
  font-size: 13px;
  letter-spacing: -0.27px;
  color: #000;
  background: #f0f0f0;
}
svg { display: block; flex: none; overflow: visible; }
svg.defs { position: absolute; }
i { display: block; flex: none; font-style: normal; }
span, b { white-space: nowrap; }
.g-bold { font: bold 9px "DejaVu Sans Condensed", "DejaVu Sans", sans-serif; letter-spacing: -0.4px; }
.g-sans { font-family: "DejaVu Sans", sans-serif; letter-spacing: 0; }
.g-serif { font-family: "Liberation Serif", serif; font-weight: bold; font-style: italic; letter-spacing: 0; }
.g-serifn { font-family: "Liberation Serif", serif; letter-spacing: 0; }

.window { width: 1913px; height: 1027px; display: flex; flex-direction: column; overflow: hidden; }

.titlebar { height: 28px; flex: none; background: #fff; display: flex; align-items: center; padding-bottom: 2px; }
.logo { width: 19px; height: 19px; }
.title { margin-left: 6px; font-family: "Open Sans", "Noto Sans", sans-serif; font-stretch: normal; font-size: 14.500px; letter-spacing: -0.1px; }
.winbtns { display: flex; margin-left: auto; margin-right: -2px; }
.winbtns svg { width: 12px; height: 12px; margin: 0 23.500px; }

.menubar { height: 22px; flex: none; background: #fff; display: flex; padding-left: 6px; line-height: 23px; letter-spacing: -0.33px; }
.menubar span { width: 56px; }
.menubar .m2, .menubar .m3 { width: 61px; }
.menubar .m4 { width: 52px; }
.menubar .m5 { width: 72px; }
.menubar .m6 { width: 108px; }
.menubar .m7 { width: 53px; }
.menubar .m8 { width: 46px; }
.menubar .m9 { width: 69px; }
.menubar .m10 { width: 42px; }
.menubar .m11 { width: 79px; }

.toolrow { height: 34px; flex: none; display: flex; border-bottom: 1px solid #a9a9a9; background: #f0f0f0; }
.tools { display: flex; align-items: center; border-left: 1px solid #b5b5b5; padding: 1px 2px 0 0; }
.tools::before { content: ""; width: 3px; height: 27px; margin: 0 4px; background: radial-gradient(circle, #a8a8a8 1.200px, transparent 1.500px) 0 0 / 3px 4px; }
.tools.first { margin-left: -2px; }
.tools > svg { width: 31px; height: 30px; padding: 3px 4px; }
.tools > svg.on { background: #c2dff5; outline: 1px solid #8fc6f3; outline-offset: -1px; }
.drop { width: 15px; height: 6px; background: #000; clip-path: polygon(2px 0, 13px 0, 7.500px 6px); }
.drop.dim { background: #777; }

.work { flex: 1; min-height: 0; display: flex; }
.dock { display: flex; flex-direction: column; flex: none; padding-top: 1px; }
.layers { width: 292px; }
.browser { width: 329px; padding-left: 5px; }
.dockhead { height: 23px; display: flex; align-items: center; background: #dadada; border: 1px solid #b8b8b8; padding: 0 0 0 2px; }
.dockhead span { flex: 1; }
.dockhead svg { width: 10px; height: 10px; margin-right: 3px; }
.dockhead svg.fl { margin-right: 7px; }
.browser .dockhead { padding: 0 0 0 4px; border-right: 0; }
.browser .dockhead svg:last-child { margin-right: -3px; }
.browser .dockhead .fl { margin-right: 8px; }
.docktools { height: 28px; display: flex; align-items: center; gap: 7px; padding: 2px 0 0 3px; }
.docktools svg { width: 16px; height: 16px; }
.docktools .drop { width: 15px; margin: 0 -3.500px; }
.browser .docktools { padding-left: 5px; }
.tree { flex: 1; background: #fff; border: 1px solid #82868f; }
.layers .tree { border-left: 0; }
.browser .tree { border-right: 0; letter-spacing: -0.04px; }
.canvas { width: 1287px; flex: none; margin-left: 5px; background: #fff; border: 1px solid #82868f; overflow: hidden; }
.canvas circle { stroke: #232323; stroke-width: 1; }

.lrow { height: 24px; display: flex; align-items: center; padding-left: 52px; }
.lrow span { padding-top: 1px; }
.lrow.root { padding-left: 0; background: linear-gradient(90deg, #fff 24px, #cce8ff 24px); }
.lrow.root .chev { margin: 0 11px 0 5px; }
.lrow.off { padding-left: 27px; }
.chev { width: 11px; height: 11px; }
.cb { width: 16px; height: 16px; border: 1px solid #333; background: #fff; }
.cb.on::after { content: ""; display: block; width: 11px; height: 5px; margin: 2px 0 0 2px; border-left: 1.500px solid #333; border-bottom: 1.500px solid #333; transform: rotate(-48deg) scale(.95); }
.dot { width: 10px; height: 10px; border-radius: 50%; border: 1px solid #232323; margin: 0 11.500px 0 11px; }
.lrow b { font-size: 13px; letter-spacing: -0.4px; }
.sel { margin-left: 5px; flex: 1; height: 24px; display: flex; align-items: center; border: 1px dotted #222; }
.sel svg { width: 16px; height: 16px; margin: 0 7px 0 3px; }
.sel b { text-decoration: underline; }
.off b { color: #b9b9b9; }

.brow { height: 24px; display: flex; align-items: center; padding: 0 0 0 7px; }
.brow span { padding-top: 1px; }
.brow.sub { padding-left: 32px; }
.brow svg { width: 20px; height: 20px; margin-right: 7px; }
.brow .chev { width: 12px; height: 12px; margin-right: 9px; }
.brow.sub .chev { margin-right: 8px; }

.status { height: 29px; flex: none; display: flex; align-items: center; padding: 3px 0 0 2px; }
.box { height: 22px; display: flex; align-items: center; background: #fff; border: 1px solid #7a7a7a; }
.search { width: 249px; padding-left: 8px; color: #777; }
.search svg { width: 13px; height: 13px; margin-right: 7px; }
.msg { margin-left: 8px; width: 742px; }
.right { display: flex; align-items: center; flex: none; }
.s1 { width: 67px; }
.coord { width: 134px; justify-content: center; }
.mouse { width: 20px; height: 20px; margin: 0 13px 0 3px; }
.s2 { width: 45px; }
.scale { width: 92px; padding-left: 4px; justify-content: space-between; padding-right: 4px; }
.scale svg { width: 11px; height: 11px; }
.lock { width: 16px; height: 20px; margin: 0 14px 0 4px; }
.s3 { width: 31px; }
.mag { width: 86px; }
.rot { width: 86px; }
.mag, .rot { padding-left: 3px; justify-content: space-between; }
.s4 { width: 48px; margin-left: 9px; }
.spin { width: 14px; height: 20px; border: 1px solid #bbb; background: #ececec; position: relative; }
.spin::before, .spin::after { content: ""; position: absolute; left: 2px; width: 8px; height: 4px; background: #000; }
.spin::before { top: 3px; clip-path: polygon(50% 0, 100% 100%, 0 100%); }
.spin::after { bottom: 3px; clip-path: polygon(0 0, 100% 0, 50% 100%); }
.right .cb { margin: 0 6px 0 5px; }
.s5 { width: 89px; }
.crs { width: 20px; height: 20px; margin-right: 4px; }
.s6 { width: 83px; letter-spacing: -0.15px; }
.chat { width: 20px; height: 20px; }
```
FILE: map.js
```js
const colors = {
  '1.1.1': '#21e862', '1.1.2.1': '#2850d8', '1.1.2.2': '#e88abf', '1.1.2.3': '#83cb2f', '1.1.2.4': '#42e22d',
  '1.1.3': '#df35df', '1.1.4.1': '#eb5fcb', '1.1.4.2': '#19d8a6', '1.1.4.3': '#bd82e6', '1.1.4.4': '#e2a26d',
  '1.2.1': '#d9e37a', '1.2.2': '#cc3366', '1.2.3': '#e8da87', '1.2.4.1': '#5fb1e2', '1.2.4.2': '#17df2c',
  '1.2.4.3': '#14cb73', '1.2.4.4': '#9e7bdb', '1.3.1': '#e42620', '1.3.2': '#22b2cb', '1.3.3': '#2579df',
  '1.3.4': '#d9991e', '1.4.1': '#e07b8c', '1.4.2': '#7a67db', '1.4.3': '#30e8dc', '1.4.4.1': '#d8917b',
  '1.4.4.2': '#c8ee6e', '1.4.4.3': '#5658d2', '1.4.4.4': '#af1cd4', '': '#58f01a'
};

// Each tile holds its origin, its units per pixel on both axes, and points by class.
const tiles = [
  [320, 220, 3, 3, {
    '1.1.1': '315,63 651,186 570,228 495,234 402,252 330,264 249,300 198,336 96,366 81,369 516,312 570,309 609,309 693,303 414,333 366,345 321,363 696,354 699,381 600,372 588,420 288,417 324,432 375,447 105,453 75,489 474,468 525,480 567,483 687,435 666,468 639,507 681,528 204,516',
    '1.1.2.1': '903,150 705,183 753,183 819,183 957,180 957,216 1080,189 1083,222',
    '1.1.2.3': '729,297 777,300 879,300 927,297 963,303 1038,309 1098,330 1092,309 966,354 966,381 801,378 861,375 1077,402 1155,399 783,480 828,489 939,501 924,525 708,534',
    '1.1.3': '222,540 258,555 306,564 60,567 171,594 204,615 240,621 288,627 75,630 396,588 432,597 477,609 600,597 627,609 669,618 111,687 147,723 213,747 270,762 279,675 312,693 357,693 402,696 507,678 552,669 588,684 633,690 654,717 486,729 531,732 576,732 654,780 696,786 426,807 540,831 690,873',
    '1.1.4.1': '819,555 861,567 897,573 942,597 1038,558 1005,612 1062,627 1119,642 759,639 801,648 840,660 762,720 795,735 837,738 951,690 984,702 1029,708 963,753 975,762 1020,777 1143,741',
    '1.1.4.3': '738,789 816,822 858,831 900,840 1059,786 1095,834 1137,822 837,906 864,999 1032,882 1065,900 1098,918 1023,969'
  }],
  [700, 220, 3, 3, {
    '1.1.2.2': '54,102 75,177 63,216 198,189 201,216 321,102 321,87 321,72 435,69 435,48 372,180',
    '1.1.2.4': '75,306 66,330 123,306 99,396 186,315 219,294 279,291 201,345 207,375 378,294 456,288 384,363 444,366 201,444 237,438 282,438 369,438 429,438 462,441 354,495 378,504 183,516 216,531',
    '1.1.4.2': '258,543 345,564 390,576 432,582 27,600 126,618 249,627 366,660 69,669 120,681 210,690 195,711 261,702 318,717 45,750 90,762 159,768 450,750',
    '1.1.4.4': '144,792 201,789 243,798 285,810 36,834 81,843 117,873 186,873 210,879 258,882 156,930 183,951 222,960 261,969 30,963 69,981 99,993 396,837 429,846 465,858 375,915 414,927 453,936 480,960 393,1002 435,1014 471,1023',
    '1.2.1': '597,42 702,69 951,66 909,111 597,192 1008,222 996,228 1044,240 1116,258 591,291 591,342 729,318 591,396 591,450 1113,471 609,504',
    '1.2.3': '600,549 540,612 603,630 693,654 759,672 486,693 606,720 804,741 969,690 513,762 570,777 669,795 723,807 801,828 858,840 1137,810 498,864 528,873 498,930 630,921 702,954 789,939 777,984 948,993 516,1017 798,1029'
  }],
  [1080, 220, 3, 3, {
    '1.2.1': '105,300 141,321 192,363 213,393 249,459',
    '1.2.3': '105,567 219,921 189,978 93,1002',
    '1.2.2': '270,135 297,243 339,285 360,315 399,357 438,408 429,393 474,465 462,444 273,492 441,531 489,519 522,522 669,168 696,192 873,357 879,54 912,72 951,90 993,108 1038,132 1080,150 1134,51',
    '1.2.4.1': '387,540 330,639 459,630',
    '1.2.4.3': '276,789 546,798 486,828 453,843 495,873 294,918 315,906 339,897 453,939 717,954 660,978 696,990 615,1014 687,1023',
    '1.2.4.4': '747,939 744,999 867,840 864,873 921,885 822,900 819,939 837,957 804,981 870,969 873,945 894,933 927,930 870,1005 1086,795 1089,816 1071,840 1062,855 1047,873 1023,894 999,909 1143,882 1173,900 1146,915 1143,948 1143,972 1170,969 1176,993 1179,1020 1080,1005 1092,1029',
    '1.2.4.2': '1029,687 954,747 1107,780',
    '1.4.2': '879,1047 933,1080 990,1086 1035,1065 1065,1050'
  }],
  [850, 540, 3, 3, {
    '1.4.1': '48,87 69,150 111,159 195,81 198,111 222,180 261,174 363,105 543,141 567,162 612,129 648,96 480,180 453,195 36,237 99,270 165,303 75,330 147,345 54,384 120,396 369,240 300,285 258,348 228,408 330,387 312,450 369,321 438,357 402,423 471,459 552,231 618,276 696,237 723,219 528,321 504,387 594,363 570,423 675,315 747,294 696,360 678,414 642,459 939,504',
    '1.3.2': '30,141',
    '1.4.3': '51,681 261,696 225,747 159,792 306,765 384,726 363,789 495,717 507,768 210,843 261,873 285,885 258,948 354,990 420,1038 81,1056 474,840 642,822 579,888 723,744 906,774 765,855 726,876 693,894 684,930 714,945 735,957 759,972 780,984 807,999 630,954 615,972 570,1014 618,1041 651,1056 747,1041 768,1032 852,897 888,897 918,918 861,963 933,972 906,993'
  }],
  [1150, 550, 3, 3, {
    '1.4.2': '936,114 798,144 834,159 867,186 906,204 948,234 693,168 666,195 672,201 534,207 630,276 579,285 570,312 537,333 657,333 609,357 480,369 450,387 417,405 588,390 618,402 546,402 531,423 513,438 483,453 459,465 432,492 441,477 333,462 300,483 276,495 246,504 177,531 960,378 933,405 924,438 918,453 903,516 903,498',
    '1.4.4.1': '309,543 417,540 246,594 288,594 198,606 171,615 147,639 96,666 108,657 78,687 357,603 417,609 495,618 297,654 312,642 276,675 264,687 228,723 240,708 162,735 183,747 387,648 372,663 342,687 327,702 288,741 303,726',
    '1.4.4.2': '516,549 648,537 765,552 897,537 891,555 885,573 879,597 969,603 576,627 678,633 765,639 573,675 567,696 558,726 549,762 663,684 657,720 648,744 642,762 954,666 945,657 858,684 846,750 843,780 936,723 951,756 921,777',
    '1.4.4.4': '546,783 537,816 534,831 519,870 636,792 633,810 627,831 624,852 615,885 681,891 756,897 813,885 834,813 828,840 918,798 912,819 906,843 903,864 897,885 894,909 960,921',
    '1.4.4.3': '255,783 276,792 318,810 354,828 390,852 444,852 81,921 159,954 198,972 216,975 255,990 276,996'
  }],
  [320, 540, 2.7034, 3, {
    '1.3.2': '784,87 846,72 992,102 1149,120 814,147 848,189 897,228 954,255 1019,276 1084,297 1078,237 1173,258 1173,306 1214,324 1262,276 1281,336 1300,192 1227,78 1259,87 1297,96 1403,216 1365,303 1349,351 1413,366 1432,318 1000,486 932,528 1365,546',
    '1.3.1': '281,492 405,558',
    '1.3.3': '256,606 332,690 400,708 446,726 548,663 629,741',
    '1.3.4': '729,810 935,855 1081,858 1167,909 935,1005 1021,1029 1216,822 1127,624 1246,612 1335,783 1386,861 1392,720 1427,663 1432,795 1343,1008'
  }]
];

let marks = '';
for (const [ox, oy, ux, uy, groups] of tiles) {
  for (const name in groups) {
    for (const pair of groups[name].split(' ')) {
      const [x, y] = pair.split(',').map(Number);
      marks += `<circle cx="${(ox + x / ux).toFixed(1)}" cy="${(oy + y / uy).toFixed(1)}" r="4.6" fill="${colors[name]}"/>`;
    }
  }
}
document.getElementById('points').innerHTML = marks;

let rows = '';
for (const name in colors) {
  rows += `<div class="lrow"><i class="cb on"></i><i class="dot" style="background:${colors[name]}"></i><span>${name}</span></div>`;
}
rows += '<div class="lrow off"><i class="cb"></i><i class="dot" style="background:#8b569b"></i><b>input</b></div>';
document.getElementById('legend').insertAdjacentHTML('beforeend', rows);
```
